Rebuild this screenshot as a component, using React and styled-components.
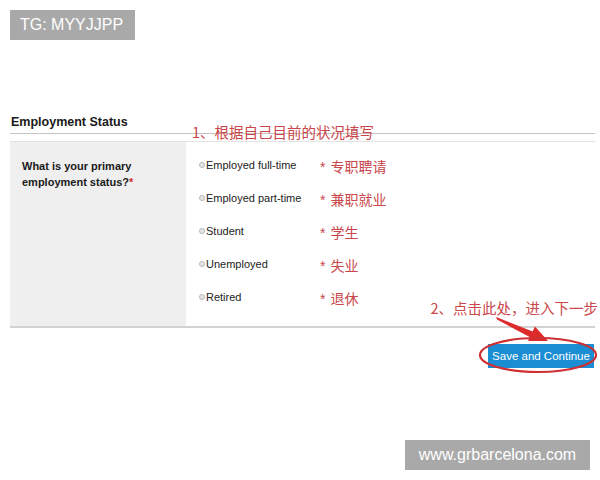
import React from "react";
import styled, { createGlobalStyle } from "styled-components";

const GlobalStyle = createGlobalStyle`
  html, body {
    margin: 0;
    padding: 0;
    background: #ffffff;
  }
  body {
    font-family: "Liberation Sans", Arial, sans-serif;
  }
`;

const RED = "#c9464a";
const CJK = `"Noto Sans CJK SC", "Liberation Sans", sans-serif`;

const options = [
  { label: "Employed full-time", note: "专职聘请" },
  { label: "Employed part-time", note: "兼职就业" },
  { label: "Student", note: "学生" },
  { label: "Unemployed", note: "失业" },
  { label: "Retired", note: "退休" },
];

export default function App() {
  return (
    <Page>
      <GlobalStyle />
      <Badge>TG: MYYJJPP</Badge>

      <Section>
        <Heading>
          Employment Status
          <StepNote $top={9} $left={182}>1、根据自己目前的状况填写</StepNote>
        </Heading>

        <Table>
          <QuestionCell>
            What is your primary
            <br />
            employment status?<Required>*</Required>
          </QuestionCell>
          <OptionList>
            {options.map((opt) => (
              <OptionRow key={opt.label}>
                <Bullet />
                <OptionLabel>{opt.label}</OptionLabel>
                <Note>
                  <Star>*</Star>
                  {opt.note}
                </Note>
              </OptionRow>
            ))}
          </OptionList>
        </Table>

        <ButtonRow>
          <StepNote $top={-45} $right={-3}>2、点击此处，进入下一步</StepNote>
          {/* hand-drawn arrow + circle round the button */}
          <Marker width="130" height="56" viewBox="0 0 130 56">
            <polygon points="28,-2 29,0.5 63.5,19 66,13" fill="#dd2b2b" />
            <polygon points="80,22 60,22 67,7.5" fill="#dd2b2b" />
            <ellipse cx="70" cy="36" rx="58" ry="17" fill="none" stroke="#cf2f31" strokeWidth="2.2" />
          </Marker>
          <SaveButton>Save and Continue</SaveButton>
        </ButtonRow>
      </Section>

      <Footer>www.grbarcelona.com</Footer>
    </Page>
  );
}

const Page = styled.div`
  box-sizing: border-box;
  width: 600px;
  height: 480px;
  padding: 10px 5px 10px 10px;
  display: flex;
  flex-direction: column;
  color: #222222;
  overflow: hidden;
`;

const Badge = styled.div`
  align-self: flex-start;
  width: 125px;
  height: 30px;
  box-sizing: border-box;
  padding-left: 10px;
  background: #a9a9a9;
  color: #ffffff;
  font-size: 16px;
  line-height: 30px;
`;

const Section = styled.div`
  margin-top: 74px;
  display: flex;
  flex-direction: column;
`;

const Heading = styled.div`
  position: relative;
  height: 16px;
  padding: 0 1px 3px;
  font-size: 12.5px;
  font-weight: bold;
  line-height: 16px;
  color: #1a1a1a;
  border-bottom: 1px solid #c4c4c4;
`;

const StepNote = styled.span`
  position: absolute;
  top: ${(p) => p.$top}px;
  ${(p) => (p.$left !== undefined ? `left: ${p.$left}px;` : "")}
  ${(p) => (p.$right !== undefined ? `right: ${p.$right}px;` : "")}
  font-family: ${CJK};
  font-size: 14.5px;
  font-weight: normal;
  line-height: 18px;
  color: ${RED};
  white-space: nowrap;
  z-index: 2;
`;

const Table = styled.div`
  margin-top: 7px;
  height: 184px;
  display: grid;
  grid-template-columns: 176px 1fr;
  border-top: 1px solid #e2e2e2;
  border-bottom: 2px solid #d2d2d2;
`;

const QuestionCell = styled.div`
  background: #efefef;
  padding: 16px 12px;
  font-size: 11px;
  font-weight: bold;
  line-height: 16px;
  color: #1a1a1a;
`;

const Required = styled.span`
  color: #d03030;
`;

const OptionList = styled.div`
  padding: 6px 0 0 13px;
  display: flex;
  flex-direction: column;
`;

const OptionRow = styled.div`
  height: 33px;
  display: flex;
  align-items: center;
`;

const Bullet = styled.span`
  width: 4px;
  height: 4px;
  border-radius: 50%;
  border: 1px solid #b8b8b8;
  background: #e6e6e6;
  margin-right: 1px;
  flex-shrink: 0;
`;

const OptionLabel = styled.span`
  width: 114px;
  font-size: 11px;
  color: #222222;
`;

const Note = styled.span`
  margin-top: 3px;
  font-family: ${CJK};
  font-size: 14px;
  color: ${RED};
`;

const Star = styled.span`
  font-family: "Liberation Sans", sans-serif;
  margin-right: 5px;
`;

const ButtonRow = styled.div`
  position: relative;
  margin-top: 16px;
  display: flex;
  justify-content: flex-end;
  padding-right: 1px;
`;

const Marker = styled.svg`
  position: absolute;
  right: -3px;
  top: -25px;
  overflow: visible;
  pointer-events: none;
  z-index: 1;
`;

const SaveButton = styled.button`
  width: 106px;
  height: 24px;
  padding: 0;
  border: none;
  background: #1a8dd3;
  color: #ffffff;
  font-family: "Liberation Sans", Arial, sans-serif;
  font-size: 11.5px;
  cursor: pointer;
`;

const Footer = styled.div`
  margin-top: auto;
  align-self: flex-end;
  margin-right: 5px;
  width: 185px;
  height: 30px;
  background: #a9a9a9;
  color: #ffffff;
  font-size: 16px;
  line-height: 30px;
  text-align: center;
`;
